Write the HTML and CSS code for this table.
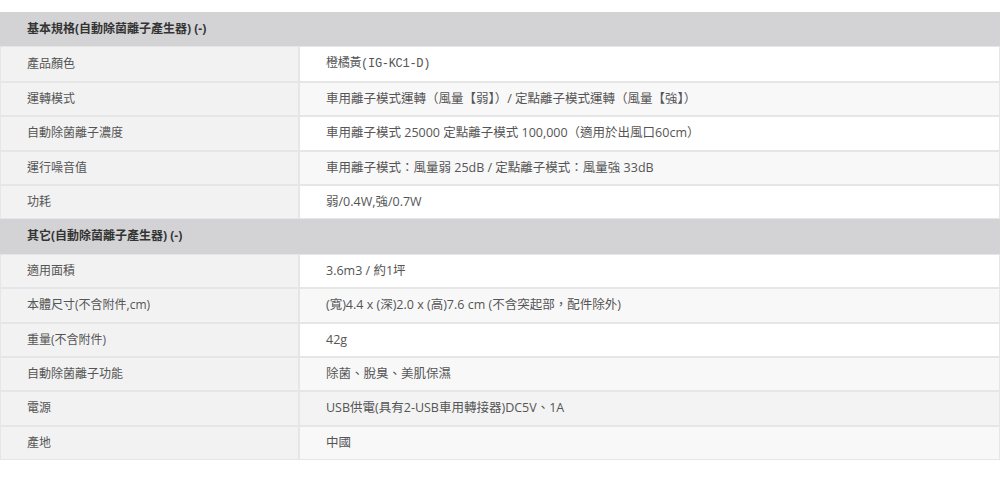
FILE: index.html
```html
<!DOCTYPE html>
<html lang="zh-Hant">
<head>
  <meta charset="UTF-8">
  <meta name="viewport" content="width=device-width, initial-scale=1.0">
  <title>規格表</title>
  <link rel="stylesheet" href="styles.css">
</head>
<body>
  <table class="spec-table">
    <colgroup>
      <col class="col-label">
      <col class="col-value">
    </colgroup>
    <tbody>
      <tr class="group-row"><th colspan="2">基本規格(自動除菌離子產生器) (-)</th></tr>
      <tr><td class="label">產品顏色</td><td class="value"><span class="mono">橙橘黃(IG-KC1-D)</span></td></tr>
      <tr><td class="label">運轉模式</td><td class="value">車用離子模式運轉（風量【弱】）/ 定點離子模式運轉（風量【強】）</td></tr>
      <tr><td class="label">自動除菌離子濃度</td><td class="value">車用離子模式 25000 定點離子模式 100,000（適用於出風口60cm）</td></tr>
      <tr><td class="label">運行噪音值</td><td class="value">車用離子模式：風量弱 25dB / 定點離子模式：風量強 33dB</td></tr>
      <tr><td class="label">功耗</td><td class="value">弱/0.4W,強/0.7W</td></tr>
    </tbody>
    <tbody>
      <tr class="group-row"><th colspan="2">其它(自動除菌離子產生器) (-)</th></tr>
      <tr><td class="label">適用面積</td><td class="value">3.6m3 / 約1坪</td></tr>
      <tr><td class="label">本體尺寸(不含附件,cm)</td><td class="value">(寬)4.4 x (深)2.0 x (高)7.6 cm (不含突起部，配件除外)</td></tr>
      <tr><td class="label">重量(不含附件)</td><td class="value">42g</td></tr>
      <tr><td class="label">自動除菌離子功能</td><td class="value">除菌、脫臭、美肌保濕</td></tr>
      <tr class="is-hover"><td class="label">電源</td><td class="value">USB供電(具有2-USB車用轉接器)DC5V、1A</td></tr>
      <tr><td class="label">產地</td><td class="value">中國</td></tr>
    </tbody>
  </table>
</body>
</html>
```

FILE: styles.css
```css
body {
  margin: 0;
  padding: 12px 0 0;
  background: #fff;
  font-family: "Open Sans", "Noto Sans CJK TC", sans-serif;
  font-size: 12px;
  color: #555;
}

.spec-table {
  width: 1000px;
  border-collapse: separate;
  border-spacing: 0;
  table-layout: fixed;
}

.col-label {
  width: 299px;
}

.spec-table th,
.spec-table td {
  padding: 7px 26px;
  line-height: 18.4px;
  text-align: left;
  border: 1px solid #e6e6e6;
  white-space: nowrap;
}

.group-row th {
  background: #d3d3d5;
  border-color: #d3d3d5;
  color: #333;
  font-weight: bold;
}

.spec-table .label {
  background: #f2f2f2;
}

.spec-table .value {
  background: #fff;
  font-size: 12.5px;
}

.spec-table tr:nth-child(odd) .value {
  background: #f8f8f8;
}

.spec-table tr.is-hover .value {
  background: #f3f3f3;
}

.mono {
  font-family: "Liberation Mono", "Noto Sans CJK TC", monospace;
  font-size: 12px;
  letter-spacing: -0.3px;
}
```
